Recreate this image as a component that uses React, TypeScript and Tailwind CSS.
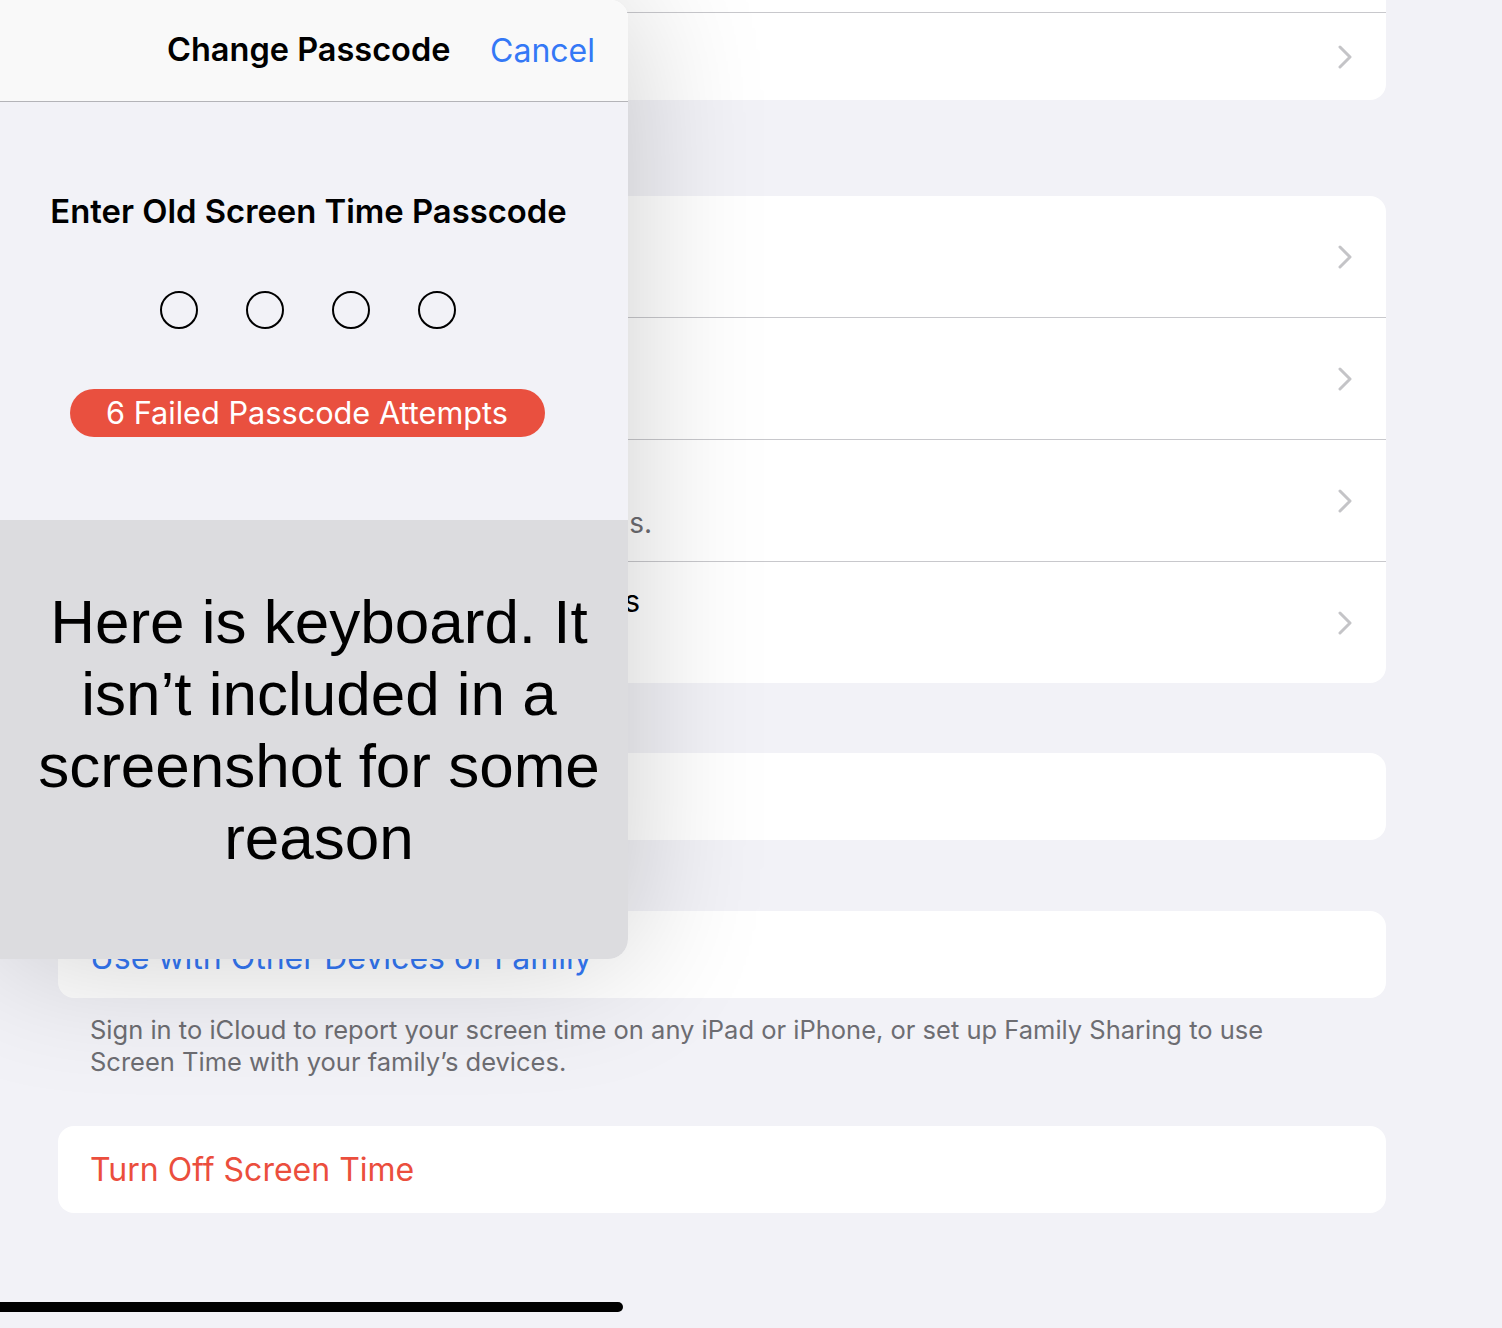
import React from "react";

function Chevron() {
  return (
    <svg width="16" height="24" viewBox="0 0 16 24" className="shrink-0">
      <polyline points="3,2 13,12 3,22" fill="none" stroke="#c4c4c7" strokeWidth="3" strokeLinecap="round" strokeLinejoin="round" />
    </svg>
  );
}

function Sep() {
  return <div className="h-px bg-[#c8c8cc] ml-[100px]" />;
}

export default function App() {
  const font = { fontFamily: "Inter, 'Noto Sans', sans-serif" };
  return (
    <div className="relative w-[1502px] h-[1328px] overflow-hidden bg-[#f2f2f7]" style={font}>
      <div className="pl-[58px] w-[1386px] flex flex-col">
        {/* card 1 */}
        <div className="bg-white rounded-b-[16px]">
          <div className="h-[12px]" />
          <Sep />
          <div className="h-[87px] flex items-center justify-end pr-[33px]">
            <Chevron />
          </div>
        </div>

        {/* card 2 */}
        <div className="mt-[96px] bg-white rounded-[16px]">
          <div className="h-[121px] flex items-center justify-end pr-[33px]">
            <Chevron />
          </div>
          <Sep />
          <div className="h-[121px] flex items-center justify-end pr-[33px]">
            <Chevron />
          </div>
          <Sep />
          <div className="h-[121px] flex items-center pr-[33px]">
            <div className="flex-1 flex flex-col pt-[44px]">
              <div className="w-[594px] text-right text-[28px] leading-[32px] text-[#6d6d72] whitespace-nowrap">
                at all time<span className="ml-[6px]">s.</span>
              </div>
            </div>
            <Chevron />
          </div>
          <Sep />
          <div className="h-[121px] flex items-center pr-[33px]">
            <div className="flex-1 flex flex-col pb-[44px]">
              <div className="w-[582px] text-right text-[30px] leading-[36px] text-black whitespace-nowrap">
                s
              </div>
            </div>
            <Chevron />
          </div>
        </div>

        {/* card 3 */}
        <div className="mt-[70px] h-[87px] bg-white rounded-[16px]" />

        {/* card 4 */}
        <div className="mt-[71px] h-[87px] bg-white rounded-[16px] flex items-center pl-[32px] pt-[6px]">
          <span className="text-[32px] text-[#3478f6]">Use with Other Devices or Family</span>
        </div>

        <div className="pt-[16px] pl-[32px] pr-[60px] text-[25.5px] leading-[32px] text-[#6d6d72] whitespace-nowrap">
          Sign in to iCloud to report your screen time on any iPad or iPhone, or set up Family Sharing to use
          <br />
          Screen Time with your family’s devices.
        </div>

        {/* card 5 */}
        <div className="mt-[48px] h-[87px] bg-white rounded-[16px] flex items-center pl-[32px]">
          <span className="text-[32px] text-[#eb4e3d]">Turn Off Screen Time</span>
        </div>
      </div>

      {/* modal */}
      <div className="absolute left-0 top-0 w-[628px] h-[959px] rounded-tr-[18px] rounded-br-[20px] overflow-hidden shadow-[0_0_140px_rgba(0,0,0,0.2)] flex flex-col">
        <div className="h-[102px] shrink-0 bg-[#f9f9f9] border-b border-[#b4b4b8] flex items-center">
          <span className="ml-[167px] text-[32.5px] font-semibold text-black">Change Passcode</span>
          <span className="ml-auto mr-[33px] text-[32px] text-[#3478f6]">Cancel</span>
        </div>
        <div className="h-[418px] shrink-0 bg-[#f2f2f7] flex flex-col items-center">
          <div className="mt-[90px] h-[40px] flex items-center text-[32.8px] font-semibold text-black ml-[-11px]">
            Enter Old Screen Time Passcode
          </div>
          <div className="mt-[59px] flex gap-[48px] ml-[-12px]">
            <div className="w-[38px] h-[38px] rounded-full border-2 border-black" />
            <div className="w-[38px] h-[38px] rounded-full border-2 border-black" />
            <div className="w-[38px] h-[38px] rounded-full border-2 border-black" />
            <div className="w-[38px] h-[38px] rounded-full border-2 border-black" />
          </div>
          <div className="mt-[60px] w-[475px] h-[48px] ml-[-14px] rounded-full bg-[#e9503f] flex items-center justify-center text-white text-[30.7px]">
            6 Failed Passcode Attempts
          </div>
        </div>
        <div
          className="flex-1 bg-[#dcdcdf] pt-[66px] pl-[10px] text-center text-[62px] leading-[72px] text-black"
          style={{ fontFamily: "'Liberation Sans', Arial, sans-serif" }}
        >
          Here is keyboard. It
          <br />
          isn’t included in a
          <br />
          screenshot for some
          <br />
          reason
        </div>
      </div>

      {/* home indicator */}
      <div className="absolute left-0 top-[1302px] w-[623px] h-[10px] rounded-r-full bg-black" />
    </div>
  );
}
